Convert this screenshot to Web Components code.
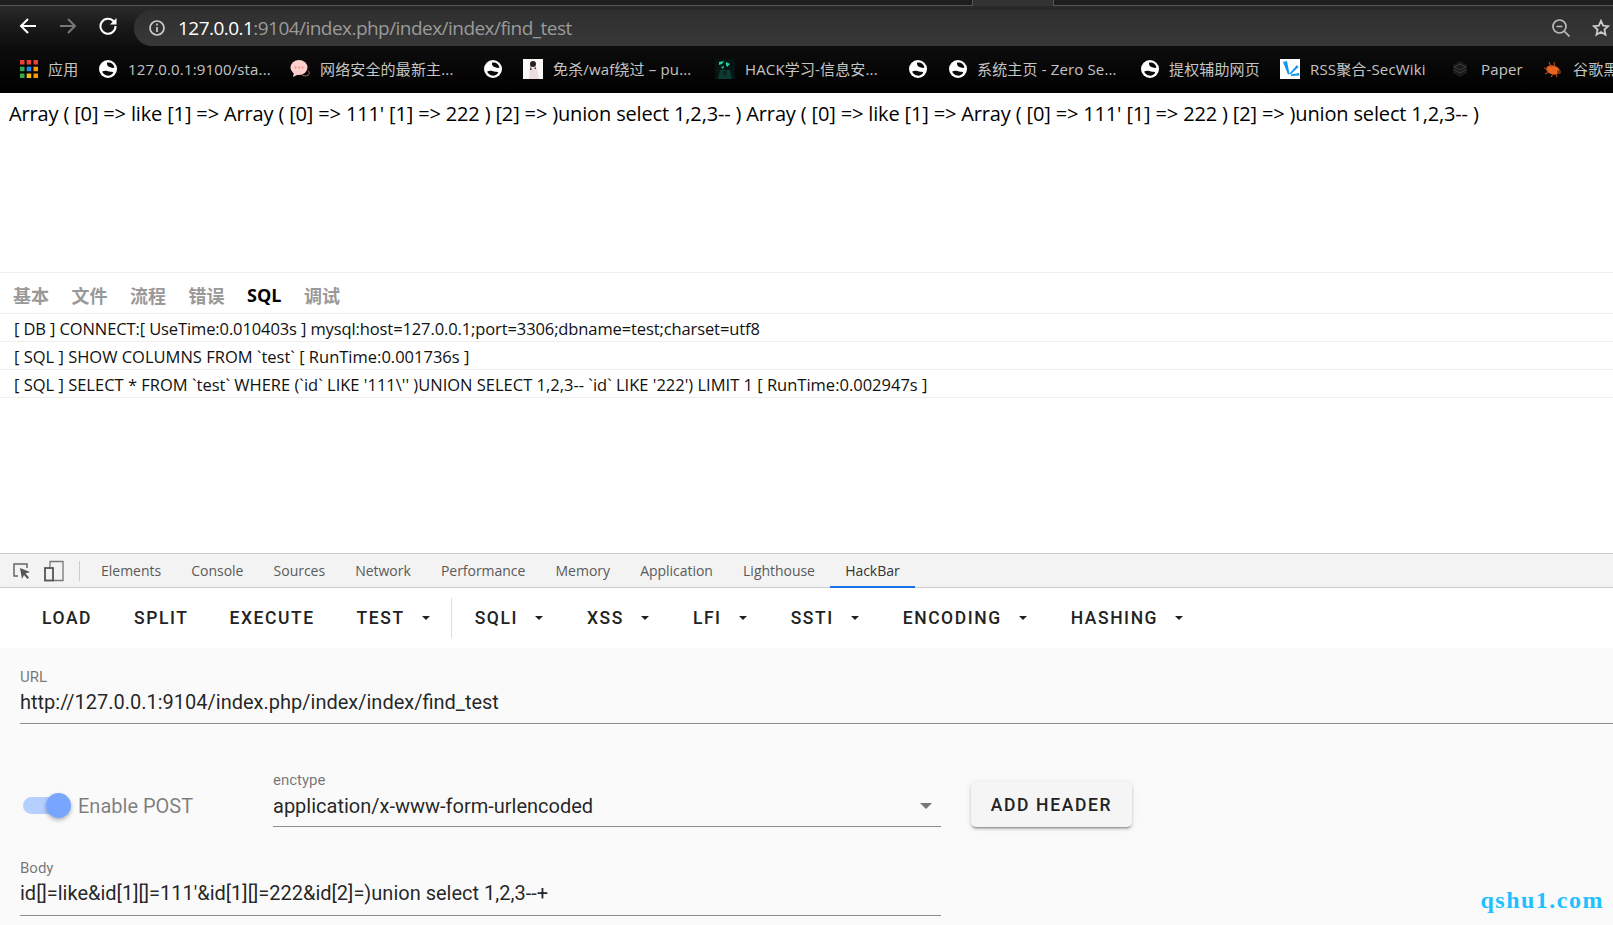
<!DOCTYPE html>
<html lang="zh">
<head>
<meta charset="utf-8">
<title>find_test</title>
<style>
html, body { margin: 0; padding: 0; background: #fff; }
body { width: 1613px; height: 925px; overflow: hidden; display: flex; flex-direction: column; font-family: "Open Sans", "Noto Sans CJK SC", sans-serif; }
</style>
</head>
<body>
<browser-chrome></browser-chrome>
<page-content></page-content>
<dev-tools></dev-tools>

<script>
const ICONS = {
    apps: `<svg width="18" height="18" viewBox="0 0 18 18">
        <rect x="0" y="0" width="4.500" height="4.500" fill="#ea4335"/><rect x="6.700" y="0" width="4.500" height="4.500" fill="#ea4335"/><rect x="13.500" y="0" width="4.500" height="4.500" fill="#ea4335"/>
        <rect x="0" y="6.700" width="4.500" height="4.500" fill="#34a853"/><rect x="6.700" y="6.700" width="4.500" height="4.500" fill="#1a8cf0"/><rect x="13.500" y="6.700" width="4.500" height="4.500" fill="#fb9a05"/>
        <rect x="0" y="13.500" width="4.500" height="4.500" fill="#34a853"/><rect x="6.700" y="13.500" width="4.500" height="4.500" fill="#fbbc05"/><rect x="13.500" y="13.500" width="4.500" height="4.500" fill="#fb9a05"/></svg>`,
    globe: `<svg width="18" height="18" viewBox="0 0 18 18"><circle cx="9" cy="9" r="9" fill="#fff"/><path d="M8 2.800c3-1 6.500.7 7.500 4.700-2 1-3.500 0-5-.5C9 6.500 7.500 5 8 2.800z" fill="#0a0a0a"/><path d="M3.200 11.500c2.800-1.500 5.300-.5 6.800 0 2 .5 3.500 0 4.300 1-1.100 2.500-3.800 3.500-6.300 3-2.300-.5-4.200-2-4.800-4z" fill="#0a0a0a"/></svg>`,
    chat: `<svg width="20" height="20" viewBox="0 0 20 20"><path d="M12 16c3 1.500 6 1 7-.5.500-1.500 0-3-1-4" stroke="#a86a66" fill="none"/><ellipse cx="9" cy="8.500" rx="8.500" ry="7.500" fill="#fbd0cc"/><path d="M4 13l-1 5 6-3z" fill="#fbd0cc"/><circle cx="5.500" cy="8.500" r="1" fill="#f08a84"/><circle cx="9" cy="8.500" r="1" fill="#f08a84"/><circle cx="12.500" cy="8.500" r="1" fill="#f08a84"/></svg>`,
    photo: `<svg width="20" height="20" viewBox="0 0 20 20"><rect width="20" height="20" fill="#faf8f6"/><path d="M7 9h7l2 11H6z" fill="#ecdcdc"/><circle cx="10" cy="5" r="3" fill="#2a2220"/><path d="M8 6l-1 5h1.500zM12 7l1 3h-1.500z" fill="#1c1614"/></svg>`,
    hack: `<svg width="20" height="20" viewBox="0 0 20 20"><rect width="20" height="20" fill="#061414"/><path d="M4 3l5-1-2 3-3 1zM11 3l4 2-3 3-1-2zM6 8l3-1-1 3z" fill="#1fd8a0"/><path d="M5 11h10l2 9H3z" fill="#0e3a36"/><path d="M8 12h4l-1 5H9z" fill="#0a2624"/></svg>`,
    rss: `<svg width="20" height="20" viewBox="0 0 20 20"><rect width="20" height="20" fill="#fff"/><path d="M3 3l4-1 2.500 13-1.500.5zM17 6l1.500 2-8 7.500-1-1zM19 14l.5 2.500-8.500.5v-1.500z" fill="#1296f0"/></svg>`,
    paper: `<svg width="16" height="18" viewBox="0 0 16 18"><path d="M8 1l7 4v8l-7 4-7-4V5z" fill="#1a1a1a"/><path d="M2 7l6-3 6 3-6 3zM2 10l6 3 6-3" stroke="#3c3c3c" fill="none"/></svg>`,
    bug: `<svg width="20" height="20" viewBox="0 0 20 20"><ellipse cx="10" cy="11" rx="7" ry="4.500" fill="#e8641f" transform="rotate(15 10 11)"/><circle cx="16" cy="13" r="2" fill="#7a3410"/><path d="M6 3l2 5M11 3l1 5M1 9l4 1M2 15l4-2M8 18l2-3M14 18l-1-3" stroke="#a84a18" stroke-width="1.200"/></svg>`
}

// top of the browser: tab strip, address bar, bookmarks
const chromeTemplate = document.createElement('template')
chromeTemplate.innerHTML = `
<style>
:host { display: block; position: relative; flex: none; height: 93px; background: #000; overflow: hidden; }
.strip { height: 6px; box-sizing: border-box; background: #1e1e1e; display: flex; border-bottom: 1px solid #555; }
.active-tab { margin-left: 972px; width: 82px; height: 6px; background: #333; border-left: 1px solid #555; border-right: 1px solid #555; box-sizing: border-box; }
.toolbar { height: 40px; display: flex; align-items: center; background: linear-gradient(#2a2a2a, #1a1a1a 50%, #0e0e0e); }
.nav { flex: none; display: flex; justify-content: center; }
.omnibox { flex: 1; height: 36px; margin: 4px 0 0 16px; border-radius: 18px 0 0 18px; background: linear-gradient(#2f2f2f, #383838); display: flex; align-items: center; padding-left: 15px; font: 19px "Open Sans", sans-serif; letter-spacing: -.54px; color: #9a9a9a; }
.omnibox b { font-weight: 400; color: #fff; }
.omnibox svg { margin-right: 13px; flex: none; }
.tail { position: absolute; right: 3px; top: 19px; display: flex; gap: 22px; align-items: center; }
.bar { height: 47px; box-sizing: border-box; padding: 0 0 2px 20px; display: flex; align-items: center; background: linear-gradient(#0d0d0d, #000); }
</style>
<div class="strip"><div class="active-tab"></div></div>
<div class="toolbar">
  <div class="nav" style="margin-left:18px;width:20px"><svg width="18" height="18" viewBox="0 0 18 18" fill="none" stroke="#fff" stroke-width="2"><path d="M17 9H2.500M9 2L2 9l7 7"/></svg></div>
  <div class="nav" style="margin-left:20px;width:20px"><svg width="18" height="18" viewBox="0 0 18 18" fill="none" stroke="#777" stroke-width="2"><path d="M1 9h14.500M9 2l7 7-7 7"/></svg></div>
  <div class="nav" style="margin-left:20px;width:20px"><svg width="18" height="18" viewBox="0 0 18 18" fill="none" stroke="#fff" stroke-width="2"><path d="M14.800 4.500A7.500 7.500 0 1 0 16.500 9"/><path d="M17.500 1v6.500H11z" fill="#fff" stroke="none"/></svg></div>
  <div class="omnibox">
    <svg width="16" height="16" viewBox="0 0 16 16" fill="none" stroke="#ccc" stroke-width="1.700"><circle cx="8" cy="8" r="7"/><path d="M8 7v5M8 3.500v2"/></svg>
    <span><b>127.0.0.1</b>:9104/index.php/index/index/find_test</span>
  </div>
</div>
<div class="tail">
  <svg width="18" height="18" viewBox="0 0 18 18" fill="none" stroke="#bbb" stroke-width="1.700"><circle cx="7.500" cy="7.500" r="6.500"/><path d="M12 12l5.500 5.500M4.500 7.500h6"/></svg>
  <svg width="18" height="18" viewBox="0 0 20 20" fill="none" stroke="#ccc" stroke-width="2"><path d="M10 2l2.400 5.300 5.600.6-4.200 3.800 1.200 5.700L10 14.500l-5 2.900 1.200-5.700L2 7.900l5.600-.6z"/></svg>
</div>
<div class="bar"><slot></slot></div>
`
class BrowserChrome extends HTMLElement {
    constructor() {
        super()
        this.attachShadow({ mode: 'open' })
        this.shadowRoot.appendChild(chromeTemplate.content.cloneNode(true))
        const bar = this.shadowRoot.querySelector('.bar')
        // [icon, text, icon x, text x]
        const marks = [
            ['apps', '应用', 20, 48], ['globe', '127.0.0.1:9100/sta...', 99, 128], ['chat', '网络安全的最新主...', 290, 320],
            ['globe', '', 484, 523], ['photo', '免杀/waf绕过 – pu...', 523, 553], ['hack', 'HACK学习-信息安...', 715, 745],
            ['globe', '', 909, 949], ['globe', '系统主页 - Zero Se...', 949, 977], ['globe', '提权辅助网页', 1141, 1169],
            ['rss', 'RSS聚合-SecWiki', 1280, 1310], ['paper', 'Paper', 1452, 1481], ['bug', '谷歌黑', 1543, 1573]
        ]
        marks.forEach((m, i) => {
            const next = marks[i + 1] ? marks[i + 1][2] : 1640
            const item = document.createElement('book-mark')
            item.style.width = (next - m[2]) + 'px'
            item.innerHTML = `<span slot="icon" style="width:${m[3] - m[2]}px">${ICONS[m[0]]}</span>${m[1]}`
            bar.appendChild(item)
        })
    }
}

const markTemplate = document.createElement('template')
markTemplate.innerHTML = `
<style>
:host { display: flex; flex: none; align-items: center; font: 15px "Open Sans", "Noto Sans CJK SC", sans-serif; letter-spacing: .15px; color: #c4c4c4; white-space: nowrap; }
::slotted([slot=icon]) { display: flex; flex: none; }
</style>
<slot name="icon"></slot><span><slot></slot></span>
`
class BookMark extends HTMLElement {
    constructor() {
        super()
        this.attachShadow({ mode: 'open' })
        this.shadowRoot.appendChild(markTemplate.content.cloneNode(true))
    }
}

// the page itself: dumped array + thinkphp trace panel
const pageTemplate = document.createElement('template')
pageTemplate.innerHTML = `
<style>
:host { display: block; flex: none; height: 460px; background: #fff; color: #000; font-family: "Open Sans", "Noto Sans CJK SC", sans-serif; overflow: hidden; }
.dump { height: 179px; box-sizing: border-box; padding: 7px 0 0 9px; font-size: 20px; line-height: 27px; letter-spacing: -.15px; white-space: nowrap; }
.trace { border-top: 1px solid #eee; }
.tabs { height: 41px; box-sizing: border-box; border-bottom: 1px solid #eee; display: flex; align-items: center; gap: 22.500px; padding: 4px 0 0 13px; font-size: 18px; font-weight: 700; color: #999; }
.tabs .on { color: #000; }
.row { height: 28px; box-sizing: border-box; border-bottom: 1px solid #eee; padding-left: 14px; font-size: 16.500px; line-height: 29px; color: #111; white-space: nowrap; }
</style>
<div class="dump">Array ( [0] =&gt; like [1] =&gt; Array ( [0] =&gt; 111' [1] =&gt; 222 ) [2] =&gt; )union select 1,2,3-- ) Array ( [0] =&gt; like [1] =&gt; Array ( [0] =&gt; 111' [1] =&gt; 222 ) [2] =&gt; )union select 1,2,3-- )</div>
<div class="trace">
  <div class="tabs"><span>基本</span><span>文件</span><span>流程</span><span>错误</span><span class="on">SQL</span><span>调试</span></div>
  <div class="row" style="letter-spacing:-.11px">[ DB ] CONNECT:[ UseTime:0.010403s ] mysql:host=127.0.0.1;port=3306;dbname=test;charset=utf8</div>
  <div class="row">[ SQL ] SHOW COLUMNS FROM \`test\` [ RunTime:0.001736s ]</div>
  <div class="row">[ SQL ] SELECT * FROM \`test\` WHERE (\`id\` LIKE '111\\'' )UNION SELECT 1,2,3-- \`id\` LIKE '222') LIMIT 1 [ RunTime:0.002947s ]</div>
</div>
`
class PageContent extends HTMLElement {
    constructor() {
        super()
        this.attachShadow({ mode: 'open' })
        this.shadowRoot.appendChild(pageTemplate.content.cloneNode(true))
    }
}

// devtools tab row, hackbar below
const devTemplate = document.createElement('template')
devTemplate.innerHTML = `
<style>
:host { display: block; flex: 1; min-height: 0; background: #fafafa; position: relative; overflow: hidden; font-family: Roboto, sans-serif; }
.tabs { height: 35px; box-sizing: border-box; background: #f3f3f3; border-top: 1px solid #ccc; border-bottom: 1px solid #ccc; display: flex; align-items: stretch; font: 14px/33px "Open Sans", sans-serif; letter-spacing: -.03px; color: #5a5a5a; }
.tools { display: flex; align-items: center; gap: 12px; padding: 0 12px; width: 55px; }
.sep { width: 1px; height: 20px; background: #ccc; align-self: center; margin: 0 6px 0 0; }
.tab { padding: 0 15.100px; box-sizing: border-box; margin-bottom: -1px; }
.tab.on { border-bottom: 2px solid #1a73e8; color: #333; }
.menu { height: 60px; background: #fff; display: flex; align-items: center; padding-left: 21px; }
.divider { width: 1px; height: 40px; background: #ddd; margin: 0 2px; }
.form { padding: 20px 20px 0; }
.mark { position: absolute; right: 9px; bottom: 11px; font: bold 24px "Liberation Serif", serif; letter-spacing: 1.500px; color: #1ec0ff; }
.post { display: flex; align-items: flex-end; margin-top: 47px; }
.switch { display: flex; align-items: center; width: 253px; height: 45px; margin-bottom: -1px; flex: none; padding-left: 3px; box-sizing: border-box; font-size: 20px; color: rgba(0,0,0,.5); }
.track { position: relative; width: 47px; height: 17px; border-radius: 9px; background: #b5cfff; margin-right: 8px; }
.knob { position: absolute; right: -1px; top: -4px; width: 25px; height: 25px; border-radius: 50%; background: #78a6ff; box-shadow: 0 2px 4px rgba(0,0,0,.3); }
.add { margin: 0 0 0 30px; width: 161px; height: 45px; border-radius: 5px; background: #f5f5f5; color: #222; display: flex; align-items: center; justify-content: center; font-size: 17.500px; font-weight: 500; letter-spacing: 1.650px; box-shadow: 0 3px 2px -2px rgba(0,0,0,.3), 0 2px 3px rgba(0,0,0,.16), 0 1px 6px rgba(0,0,0,.1); }
</style>
<div class="tabs">
  <div class="tools">
    <svg width="20" height="20" viewBox="0 0 20 20" fill="none" stroke="#666" stroke-width="1.500"><path d="M6 15H2V3h13v4"/><path d="M8 7l10 4-4.500 1.500 3.500 4-1.500 1.500-3.500-4L10 18z" fill="#555" stroke="none"/></svg>
    <svg width="20" height="22" viewBox="0 0 20 22" fill="none" stroke="#777" stroke-width="1.300"><path d="M6 7V1.500h13v19H9"/><rect x="1" y="8" width="8" height="12.500" stroke="#555" stroke-width="1.800"/></svg>
  </div>
  <div class="sep"></div>
  <div class="tab">Elements</div><div class="tab">Console</div><div class="tab">Sources</div><div class="tab">Network</div><div class="tab">Performance</div><div class="tab">Memory</div><div class="tab">Application</div><div class="tab">Lighthouse</div><div class="tab on">HackBar</div>
</div>
<div class="menu">
  <menu-button>LOAD</menu-button><menu-button style="margin-right:0">SPLIT</menu-button><menu-button>EXECUTE</menu-button><menu-button drop>TEST</menu-button>
  <div class="divider"></div>
  <menu-button drop style="margin-right:5px">SQLI</menu-button><menu-button drop style="margin-right:5px">XSS</menu-button><menu-button drop style="margin-right:5px">LFI</menu-button><menu-button drop style="margin-right:5px">SSTI</menu-button><menu-button drop style="margin-right:5px">ENCODING</menu-button><menu-button drop>HASHING</menu-button>
</div>
<div class="form">
  <text-field label="URL" style="width:1700px">http://127.0.0.1:9104/index.php/index/index/find_test</text-field>
  <div class="post">
    <div class="switch"><div class="track"><div class="knob"></div></div>Enable POST</div>
    <text-field label="enctype" select style="width:668px">application/x-www-form-urlencoded</text-field>
    <div class="add">ADD HEADER</div>
  </div>
  <text-field label="Body" style="width:921px;margin-top:32px;padding-bottom:7px">id[]=like&amp;id[1][]=111'&amp;id[1][]=222&amp;id[2]=)union select 1,2,3--+</text-field>
</div>
<div class="mark">qshu1.com</div>
`
class DevTools extends HTMLElement {
    constructor() {
        super()
        this.attachShadow({ mode: 'open' })
        this.shadowRoot.appendChild(devTemplate.content.cloneNode(true))
    }
}

const menuTemplate = document.createElement('template')
menuTemplate.innerHTML = `
<style>
:host { display: flex; flex: none; align-items: center; height: 45px; padding: 0 20px; margin: 0 1px; font: 500 17.500px Roboto, sans-serif; letter-spacing: 1.560px; color: #222; }
.caret { margin-left: 17px; margin-right: -2px; width: 0; height: 0; border-left: 4px solid transparent; border-right: 4px solid transparent; border-top: 4px solid #222; display: none; }
:host([drop]) .caret { display: block; }
</style>
<slot></slot><span class="caret"></span>
`
class MenuButton extends HTMLElement {
    constructor() {
        super()
        this.attachShadow({ mode: 'open' })
        this.shadowRoot.appendChild(menuTemplate.content.cloneNode(true))
    }
}

const fieldTemplate = document.createElement('template')
fieldTemplate.innerHTML = `
<style>
:host { display: block; flex: none; position: relative; box-sizing: border-box; border-bottom: 1px solid #8c8c8c; padding-bottom: 6px; font-family: Roboto, sans-serif; }
:host([select]) { padding-bottom: 5px; }
.label { font-size: 15px; line-height: 18px; color: rgba(0,0,0,.55); }
.value { font-size: 20px; line-height: 29px; margin-top: 2px; color: rgba(0,0,0,.87); white-space: nowrap; }
:host([select]) .value { margin-top: 3px; }
.arrow { display: none; position: absolute; right: 9px; top: 32px; width: 0; height: 0; border-left: 6px solid transparent; border-right: 6px solid transparent; border-top: 6px solid #777; }
:host([select]) .arrow { display: block; }
</style>
<div class="label"></div><div class="value"><slot></slot></div><span class="arrow"></span>
`
class TextField extends HTMLElement {
    constructor() {
        super()
        this.attachShadow({ mode: 'open' })
        this.shadowRoot.appendChild(fieldTemplate.content.cloneNode(true))
        this.shadowRoot.querySelector('.label').textContent = this.getAttribute('label')
    }
}

customElements.define('book-mark', BookMark)
customElements.define('browser-chrome', BrowserChrome)
customElements.define('page-content', PageContent)
customElements.define('menu-button', MenuButton)
customElements.define('text-field', TextField)
customElements.define('dev-tools', DevTools)
</script>
</body>
</html>
